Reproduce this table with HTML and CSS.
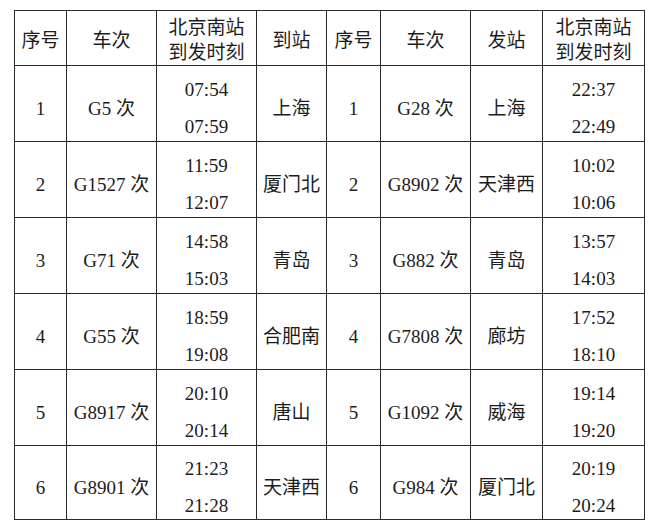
FILE: index.html
```html
<!DOCTYPE html>
<html>
<head>
<meta charset="utf-8">
<link rel="stylesheet" href="styles.css">
</head>
<body>
<table class="sched">
  <colgroup>
    <col class="c1"><col class="c2"><col class="c3"><col class="c4">
    <col class="c5"><col class="c6"><col class="c7"><col class="c8">
  </colgroup>
  <thead>
    <tr>
      <th>序号</th><th>车次</th><th>北京南站<br>到发时刻</th><th>到站</th>
      <th>序号</th><th>车次</th><th>发站</th><th>北京南站<br>到发时刻</th>
    </tr>
  </thead>
  <tbody>
    <tr>
      <td>1</td><td>G5 次</td><td><div class="times"><span>07:54</span><span>07:59</span></div></td><td>上海</td>
      <td>1</td><td>G28 次</td><td>上海</td><td><div class="times"><span>22:37</span><span>22:49</span></div></td>
    </tr>
    <tr>
      <td>2</td><td>G1527 次</td><td><div class="times"><span>11:59</span><span>12:07</span></div></td><td>厦门北</td>
      <td>2</td><td>G8902 次</td><td>天津西</td><td><div class="times"><span>10:02</span><span>10:06</span></div></td>
    </tr>
    <tr>
      <td>3</td><td>G71 次</td><td><div class="times"><span>14:58</span><span>15:03</span></div></td><td>青岛</td>
      <td>3</td><td>G882 次</td><td>青岛</td><td><div class="times"><span>13:57</span><span>14:03</span></div></td>
    </tr>
    <tr>
      <td>4</td><td>G55 次</td><td><div class="times"><span>18:59</span><span>19:08</span></div></td><td>合肥南</td>
      <td>4</td><td>G7808 次</td><td>廊坊</td><td><div class="times"><span>17:52</span><span>18:10</span></div></td>
    </tr>
    <tr>
      <td>5</td><td>G8917 次</td><td><div class="times"><span>20:10</span><span>20:14</span></div></td><td>唐山</td>
      <td>5</td><td>G1092 次</td><td>威海</td><td><div class="times"><span>19:14</span><span>19:20</span></div></td>
    </tr>
    <tr class="last">
      <td>6</td><td>G8901 次</td><td><div class="times"><span>21:23</span><span>21:28</span></div></td><td>天津西</td>
      <td>6</td><td>G984 次</td><td>厦门北</td><td><div class="times"><span>20:19</span><span>20:24</span></div></td>
    </tr>
  </tbody>
</table>
</body>
</html>
```

FILE: styles.css
```css
html, body {
  margin: 0;
  padding: 0;
  background: #ffffff;
}

body {
  font-family: "Liberation Serif", "Times New Roman", "Noto Sans CJK SC", serif;
  font-size: 19px;
  color: #1c1c1c;
}

.sched {
  margin: 10px 0 0 14px;
  width: 630px;
  border-collapse: collapse;
  table-layout: fixed;
  font-family: "Liberation Serif", "Times New Roman", "Noto Sans CJK SC", serif;
}

.c1 { width: 52px; }
.c2 { width: 90px; }
.c3 { width: 100px; }
.c4 { width: 70px; }
.c5 { width: 54px; }
.c6 { width: 90px; }
.c7 { width: 72px; }
.c8 { width: 102px; }

.sched th,
.sched td {
  border: 1px solid #2a2a2a;
  text-align: center;
  vertical-align: middle;
  padding: 10px 0 0 0;
  white-space: nowrap;
}

.sched th {
  font-weight: normal;
  height: 45px;
  line-height: 25px;
  padding-top: 4px;
}

.sched td {
  height: 65px;
  line-height: 22px;
}

.sched tr.last td {
  height: 63px;
}

.times {
  display: flex;
  flex-direction: column;
  align-items: center;
  gap: 15px;
}
```
